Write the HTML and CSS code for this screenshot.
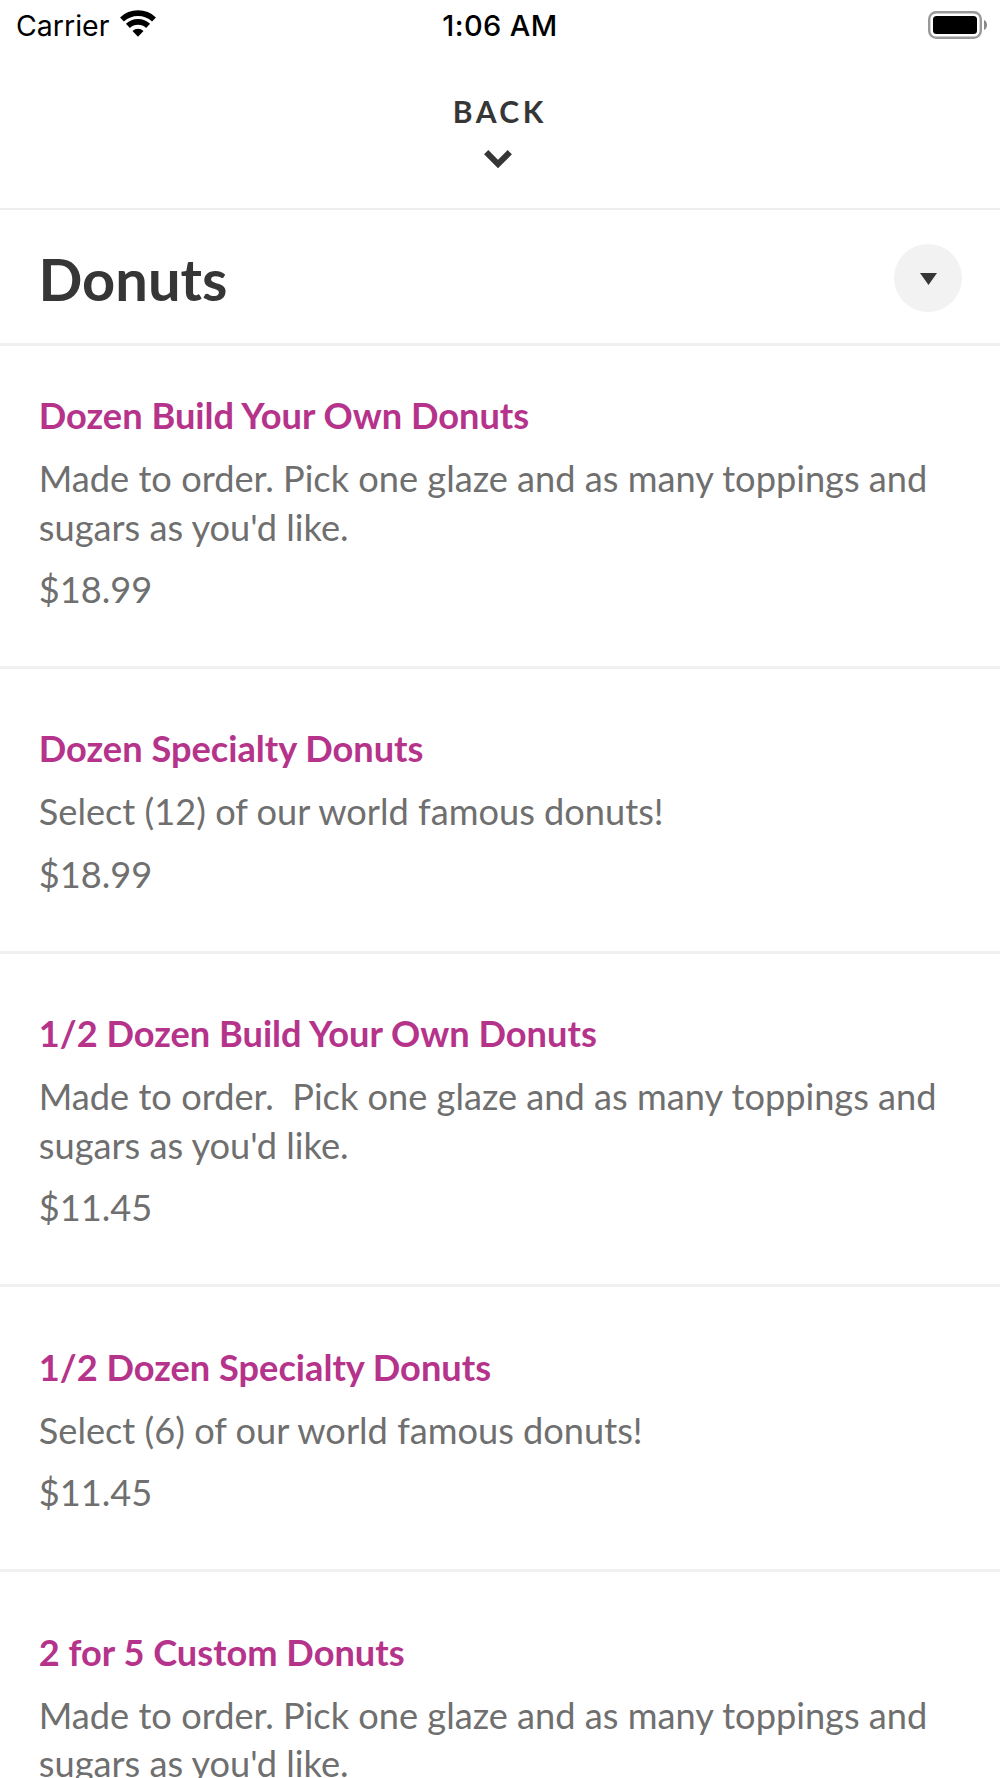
FILE: index.html
```
<!DOCTYPE html>
<html lang="en">
<head>
    <meta charset="UTF-8">
    <meta name="viewport" content="width=device-width, initial-scale=1.0">
    <title>Donuts</title>
    <link rel="stylesheet" href="styles.css">
</head>
<body>
    <div class="status-bar">
        <div class="status-left">
            <span class="carrier">Carrier</span>
            <svg class="wifi" width="38" height="27" viewBox="0 0 38 27">
                <g fill="none" stroke="#000" stroke-width="5.7">
                    <path d="M3 9.500a23.500 23.500 0 0 1 32 0"/>
                    <path d="M8.900 15.900a14.700 14.700 0 0 1 20.200 0"/>
                </g>
                <path d="M19 26.700l-5.500-5.700a8 8 0 0 1 11 0z"/>
            </svg>
        </div>
        <div class="status-time">1:06 AM</div>
        <div class="status-right">
            <svg class="battery" width="60" height="28" viewBox="0 0 60 28">
                <rect x="1.200" y="1.200" width="51.600" height="25.600" rx="7" fill="none" stroke="#999" stroke-width="2.400"/>
                <rect x="5" y="5" width="44" height="18" rx="3.500"/>
                <path d="M56 9c4 1.800 4 8.200 0 10z" fill="#888"/>
            </svg>
        </div>
    </div>

    <header class="back-bar">
        <span class="back-label">BACK</span>
        <svg class="chevron" width="28" height="19" viewBox="0 0 28 19">
            <path d="M2.200 2.200L14 14L25.800 2.200" fill="none" stroke="#363636" stroke-width="6"/>
        </svg>
    </header>

    <div class="section">
        <h1 class="section-title">Donuts</h1>
        <div class="toggle">
            <svg class="triangle" width="17" height="12" viewBox="0 0 17 12"><path d="M0 0h17L8.500 12z" fill="#363636"/></svg>
        </div>
    </div>

    <div class="menu">
        <div class="item">
            <h2 class="item-name">Dozen Build Your Own Donuts</h2>
            <p class="item-desc">Made to order. Pick one glaze and as many toppings and sugars as you'd like.</p>
            <p class="item-price">$18.99</p>
        </div>
        <div class="item">
            <h2 class="item-name">Dozen Specialty Donuts</h2>
            <p class="item-desc">Select (12) of our world famous donuts!</p>
            <p class="item-price">$18.99</p>
        </div>
        <div class="item">
            <h2 class="item-name">1/2 Dozen Build Your Own Donuts</h2>
            <p class="item-desc">Made to order.  Pick one glaze and as many toppings and sugars as you'd like.</p>
            <p class="item-price">$11.45</p>
        </div>
        <div class="item">
            <h2 class="item-name">1/2 Dozen Specialty Donuts</h2>
            <p class="item-desc">Select (6) of our world famous donuts!</p>
            <p class="item-price">$11.45</p>
        </div>
        <div class="item">
            <h2 class="item-name">2 for 5 Custom Donuts</h2>
            <p class="item-desc">Made to order. Pick one glaze and as many toppings and sugars as you'd like.</p>
        </div>
    </div>
</body>
</html>
```
FILE: styles.css
```
* {
    box-sizing: border-box;
    margin: 0;
    padding: 0;
}

body {
    height: 1778px;
    overflow: hidden;
    background-color: #fff;
    font-family: Lato, sans-serif;
    color: #363636;
}

svg {
    display: block;
}

.status-bar {
    display: grid;
    grid-template-columns: 1fr auto 1fr;
    align-items: center;
    height: 50px;
    padding: 0 16px;
    font-family: Inter, sans-serif;
    font-size: 28.5px;
    color: #000;
}

.status-left {
    display: flex;
    align-items: center;
    gap: 10px;
}

.wifi {
    margin-bottom: 3px;
}

.status-time {
    font-weight: 500;
    font-size: 29px;
    letter-spacing: 0.4px;
}

.status-right {
    display: flex;
    justify-content: flex-end;
}

.battery {
    margin: 0 -4px 1px 0;
}

.back-bar {
    display: flex;
    flex-direction: column;
    align-items: center;
    height: 160px;
    padding: 43px 4px 0 0;
    border-bottom: 2px solid #eee;
}

.back-label {
    margin-right: -3.5px;
    font-size: 30px;
    line-height: 36px;
    font-weight: 700;
    letter-spacing: 3.5px;
}

.chevron {
    margin-top: 21px;
}

.section {
    display: flex;
    justify-content: space-between;
    align-items: center;
    height: 136px;
    padding: 2px 38.5px 0 38.5px;
    border-bottom: 3px solid #f0f0f0;
}

.section-title {
    padding-top: 2px;
    font-size: 57.8px;
    line-height: 70px;
    font-weight: 700;
}

.toggle {
    display: flex;
    justify-content: center;
    align-items: center;
    width: 68px;
    height: 68px;
    border-radius: 50%;
    background-color: #f2f2f2;
}

.triangle {
    margin: 2px 0 0 2px;
}

.item {
    padding: 55.2px 38.8px 52.7px;
    border-bottom: 3px solid #f0f0f0;
}

.item:first-child {
    padding-top: 45px;
}

.item-name,
.item-desc,
.item-price {
    font-size: 36.2px;
    line-height: 48.5px;
}

.item-name {
    margin-bottom: 14.5px;
    font-weight: 700;
    color: #b5338a;
}

.item-desc {
    margin-bottom: 14px;
    color: #6f6f6f;
    white-space: pre-wrap;
}

.item-price {
    color: #6f6f6f;
}
```
